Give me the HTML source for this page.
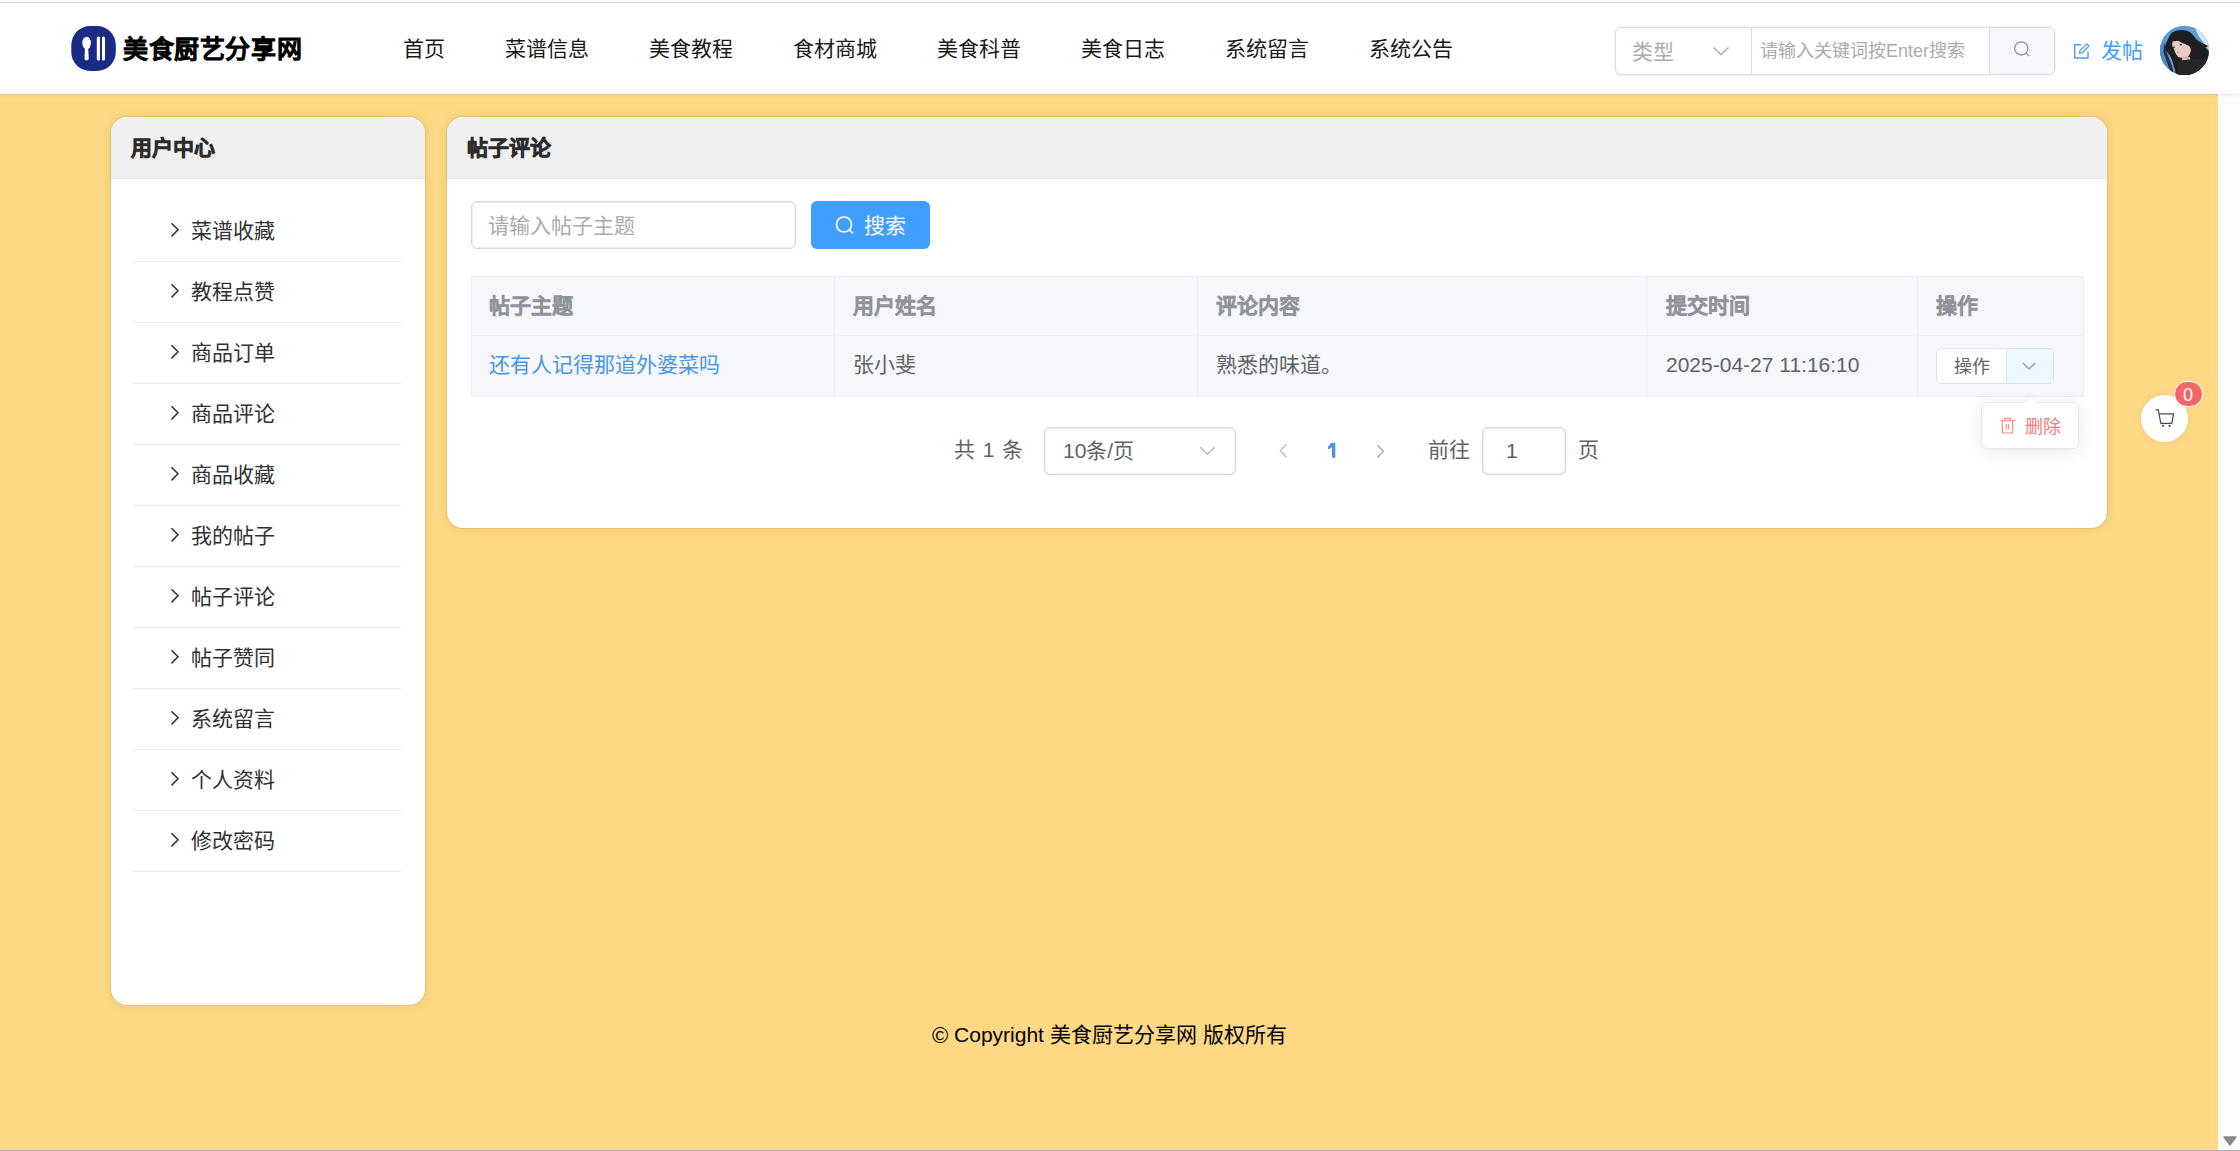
<!DOCTYPE html>
<html lang="zh-CN"><head><meta charset="utf-8">
<style>
*{box-sizing:border-box;margin:0;padding:0}
html,body{width:2240px;height:1151px;overflow:hidden}
body{position:relative;background:#fed884;font-family:"Liberation Sans",sans-serif;color:#303133}
.abs{position:absolute}
.t{position:absolute;white-space:nowrap;line-height:1}
.b{-webkit-text-stroke:0.7px currentColor}
#topline{left:0;top:0;width:2240px;height:3px;background:linear-gradient(#fafafa 0,#fafafa 1px,#fff 1px);border-bottom:1px solid #e0e0e0}
#header{left:0;top:3px;width:2240px;height:91px;background:#fff;box-shadow:0 1px 3px rgba(0,0,0,.10);z-index:5}
#scroll{left:2218px;top:94px;width:22px;height:1057px;background:#fdfdfd}
#botline{left:0;top:1150px;width:2240px;height:1px;background:#aab0b3}
.card{background:#fff;border-radius:16px;box-shadow:0 0 0 1px rgba(190,150,70,.22),0 0 10px rgba(180,130,40,.22);overflow:hidden}
.cardhd{position:absolute;left:0;top:0;right:0;height:62px;background:#f0f0f0;border-bottom:1px solid #e4e4e4}
.nav{font-size:21px;color:#1a1a1a;top:35px}
.menu .row{position:absolute;left:22px;width:268px;height:61px;border-bottom:1px solid #ebebeb}
.menu .row span{position:absolute;left:58px;top:19px;font-size:21px;color:#303133;line-height:1;white-space:nowrap}
.menu .row svg{position:absolute;left:37px;top:21px}
.th{font-size:21px;color:#909399;top:295px;-webkit-text-stroke:1.3px #909399 !important}
.td{font-size:21px;color:#606266;top:354px}
.vl{position:absolute;top:277px;width:1px;height:119px;background:#ebeef5}
</style></head><body>
<div id="topline" class="abs"></div>
<div id="header" class="abs">
  <svg class="abs" style="left:71px;top:23px" width="45" height="45" viewBox="0 0 45 45">
    <rect x="0.3" y="0" width="44.5" height="45" rx="19" fill="#1b2a85"/>
    <ellipse cx="15.6" cy="17" rx="4.3" ry="6.2" fill="#fff"/>
    <path d="M14 21 L17.2 21 L17.7 32.5 C17.7 35 13.5 35 13.5 32.5 Z" fill="#fff"/>
    <rect x="25.8" y="10.5" width="3.2" height="24" rx="1.6" fill="#fff"/>
    <rect x="31" y="10.5" width="3" height="24" rx="1.5" fill="#fff"/>
  </svg>
  <div class="t b" style="left:123px;top:34px;font-size:25px;letter-spacing:0.6px;color:#000;-webkit-text-stroke:1.5px #000">美食厨艺分享网</div>
  <div class="t nav" style="left:403px">首页</div>
  <div class="t nav" style="left:505px">菜谱信息</div>
  <div class="t nav" style="left:649px">美食教程</div>
  <div class="t nav" style="left:793px">食材商城</div>
  <div class="t nav" style="left:937px">美食科普</div>
  <div class="t nav" style="left:1081px">美食日志</div>
  <div class="t nav" style="left:1225px">系统留言</div>
  <div class="t nav" style="left:1369px">系统公告</div>

  <!-- search group -->
  <div class="abs" style="left:1615px;top:24px;width:440px;height:48px;border:1px solid #d9dce3;border-radius:6px;overflow:hidden;box-shadow:0 0 0 0.5px rgba(217,220,227,.6)">
    <div class="abs" style="left:135px;top:0;width:1px;height:46px;background:#d9dce3"></div>
    <div class="abs" style="left:373px;top:0;width:66px;height:46px;background:#f5f7fa;border-left:1px solid #d9dce3"></div>
  </div>
  <div class="t" style="left:1632px;top:38px;font-size:21px;color:#a8abb2">类型</div>
  <svg class="abs" style="left:1712px;top:43px" width="18" height="10" viewBox="0 0 18 10"><path d="M1.5 1.5 L9 8.8 L16.5 1.5" fill="none" stroke="#a8abb2" stroke-width="1.4"/></svg>
  <div class="t" style="left:1760px;top:39px;font-size:18px;color:#a8abb2">请输入关键词按Enter搜索</div>
  <svg class="abs" style="left:2012px;top:35px" width="20" height="20" viewBox="0 0 20 20"><circle cx="9.3" cy="10.4" r="6.6" fill="none" stroke="#8f9296" stroke-width="1.3"/><path d="M14 15.2 L17 18" stroke="#8f9296" stroke-width="1.3"/></svg>
  <svg class="abs" style="left:2072px;top:38px" width="20" height="20" viewBox="0 0 20 20"><path d="M9 3.7 H2.7 V17 H16 V10.5" fill="none" stroke="#4a9ff5" stroke-width="1.4"/><path d="M7.5 12.3 L8 9.5 L14.8 2.8 L17 5 L10.3 11.8 Z" fill="none" stroke="#4a9ff5" stroke-width="1.3"/></svg>
  <div class="t" style="left:2101px;top:37px;font-size:21px;color:#409eff">发帖</div>
  <div class="abs" style="left:2160px;top:23px;width:49px;height:49px;border-radius:50%;overflow:hidden;background:#6aa3d8">
    <svg width="49" height="49" viewBox="0 0 49 49">
      <rect width="49" height="49" fill="#5b9ad4"/>
      <path d="M0 20 L8 14 L6 49 L0 49Z" fill="#4f8cc6"/>
      <path d="M34 0 L49 0 L49 24 C46 20 42 15 38 9Z" fill="#d6e6f3"/>
      <path d="M12 6.5 C15 4.5 19 3.8 23 4 C27 4.3 30.5 6 32.7 8.8 C34.5 11 35.5 12.5 36.5 13.5 C39 15.5 42 17 48.7 20 L45 21.5 C47 23 48.7 25 49 26.2 L49 49 L16 49 C15.5 46 15 44 14 41 C13 37 12 33 10.5 30.5 C8.5 28 6.5 25 4.5 22 C5.5 19 6.5 16 8 13 C9 10.5 10.5 8 12 6.5Z" fill="#1e1e20"/>
      <path d="M4 17 C6 25 9 33 12 40 L14 49 L11 49 C9 42 6 34 3.5 26 Z" fill="#26313c"/>
      <path d="M13 13.5 C15 14 16.5 14.2 17.7 14.4 C20 15.8 22.5 17 24.3 17.7 C26 18.5 28 19.2 29 20 C30.3 21.5 30.9 23 30.9 24.3 C30.5 27 29.5 29.5 28 30.9 C26.5 31.6 24.5 31.9 22.9 31.8 C21 31.6 19.5 31.3 18.2 30.9 C17 29.8 16 28.5 15.4 27.1 C14.8 25.7 14.3 24.2 14 22.9 C13.3 21.8 12.6 20.7 12.1 19.6 C12.3 17.5 12.6 15.5 13 13.5Z" fill="#e9cbc3"/>
      <path d="M22.4 31.8 L30 31 L30.5 34 L22 35Z" fill="#dcbab2"/>
      <path d="M19 35 C25 33.5 38 32.5 45 33.2 L49 38 L49 49 L17 49 C17 44 17.5 39 19 35Z" fill="#262628"/>
      <path d="M11 10 C17 9 25 10.5 31 16 C26 14.5 20 14 13 15.5 Z" fill="#1e1e20"/>
      <ellipse cx="20.8" cy="18.6" rx="1.3" ry="0.9" fill="#3b2523"/>
      <ellipse cx="14" cy="21.2" rx="0.9" ry="0.8" fill="#3b2523"/>
      <ellipse cx="17.8" cy="26.4" rx="0.9" ry="0.6" fill="#c98b86"/>
    </svg>
  </div>
</div>
<div id="scroll" class="abs"></div>
<svg class="abs" style="left:2223px;top:1135px" width="14" height="12" viewBox="0 0 14 12"><path d="M1 2 H13 L7 10 Z" fill="#8a8a8a" stroke="#8a8a8a" stroke-width="1.5" stroke-linejoin="round"/></svg>
<div id="botline" class="abs"></div>

<!-- sidebar -->
<div class="card abs menu" style="left:111px;top:117px;width:314px;height:888px">
  <div class="cardhd"></div>
  <div class="t b" style="left:20px;top:20px;font-size:21px;color:#2b2b2b;-webkit-text-stroke:1.5px #2b2b2b">用户中心</div>
  <div class="row" style="top:84px"><svg width="10" height="17" viewBox="0 0 10 17"><path d="M1.5 1.2 L8 7.8 L1.5 14.4" fill="none" stroke="#303133" stroke-width="1.5"/></svg><span>菜谱收藏</span></div>
  <div class="row" style="top:145px"><svg width="10" height="17" viewBox="0 0 10 17"><path d="M1.5 1.2 L8 7.8 L1.5 14.4" fill="none" stroke="#303133" stroke-width="1.5"/></svg><span>教程点赞</span></div>
  <div class="row" style="top:206px"><svg width="10" height="17" viewBox="0 0 10 17"><path d="M1.5 1.2 L8 7.8 L1.5 14.4" fill="none" stroke="#303133" stroke-width="1.5"/></svg><span>商品订单</span></div>
  <div class="row" style="top:267px"><svg width="10" height="17" viewBox="0 0 10 17"><path d="M1.5 1.2 L8 7.8 L1.5 14.4" fill="none" stroke="#303133" stroke-width="1.5"/></svg><span>商品评论</span></div>
  <div class="row" style="top:328px"><svg width="10" height="17" viewBox="0 0 10 17"><path d="M1.5 1.2 L8 7.8 L1.5 14.4" fill="none" stroke="#303133" stroke-width="1.5"/></svg><span>商品收藏</span></div>
  <div class="row" style="top:389px"><svg width="10" height="17" viewBox="0 0 10 17"><path d="M1.5 1.2 L8 7.8 L1.5 14.4" fill="none" stroke="#303133" stroke-width="1.5"/></svg><span>我的帖子</span></div>
  <div class="row" style="top:450px"><svg width="10" height="17" viewBox="0 0 10 17"><path d="M1.5 1.2 L8 7.8 L1.5 14.4" fill="none" stroke="#303133" stroke-width="1.5"/></svg><span>帖子评论</span></div>
  <div class="row" style="top:511px"><svg width="10" height="17" viewBox="0 0 10 17"><path d="M1.5 1.2 L8 7.8 L1.5 14.4" fill="none" stroke="#303133" stroke-width="1.5"/></svg><span>帖子赞同</span></div>
  <div class="row" style="top:572px"><svg width="10" height="17" viewBox="0 0 10 17"><path d="M1.5 1.2 L8 7.8 L1.5 14.4" fill="none" stroke="#303133" stroke-width="1.5"/></svg><span>系统留言</span></div>
  <div class="row" style="top:633px"><svg width="10" height="17" viewBox="0 0 10 17"><path d="M1.5 1.2 L8 7.8 L1.5 14.4" fill="none" stroke="#303133" stroke-width="1.5"/></svg><span>个人资料</span></div>
  <div class="row" style="top:694px"><svg width="10" height="17" viewBox="0 0 10 17"><path d="M1.5 1.2 L8 7.8 L1.5 14.4" fill="none" stroke="#303133" stroke-width="1.5"/></svg><span>修改密码</span></div>
</div>

<!-- main card -->
<div class="card abs" style="left:447px;top:117px;width:1660px;height:411px">
  <div class="cardhd"></div>
  <div class="t b" style="left:20px;top:20px;font-size:21px;color:#2b2b2b;-webkit-text-stroke:1.5px #2b2b2b">帖子评论</div>
</div>

<!-- search -->
<div class="abs" style="left:471px;top:201px;width:325px;height:48px;border:1px solid #d5d7db;border-radius:6px;background:#fff;box-shadow:inset 0 0 0 1px #eeeff1"></div>
<div class="t" style="left:488px;top:215px;font-size:21px;color:#a8abb2">请输入帖子主题</div>
<div class="abs" style="left:811px;top:201px;width:119px;height:48px;border-radius:6px;background:#409eff"></div>
<svg class="abs" style="left:834px;top:214px" width="22" height="22" viewBox="0 0 22 22"><circle cx="10" cy="10.5" r="7.5" fill="none" stroke="#fff" stroke-width="1.7"/><path d="M15.5 16 L19 19.5" stroke="#fff" stroke-width="1.7"/></svg>
<div class="t" style="left:864px;top:215px;font-size:21px;color:#fff">搜索</div>

<!-- table -->
<div class="abs" style="left:471px;top:276px;width:1613px;height:121px;background:#f5f7fa;border:1px solid #ebeef5"></div>
<div class="abs" style="left:472px;top:335px;width:1611px;height:1px;background:#ebeef5"></div>
<div class="vl" style="left:834px"></div>
<div class="vl" style="left:1197px"></div>
<div class="vl" style="left:1647px"></div>
<div class="vl" style="left:1917px"></div>
<div class="t th b" style="left:489px;-webkit-text-stroke:0.7px #909399">帖子主题</div>
<div class="t th b" style="left:853px;-webkit-text-stroke:0.7px #909399">用户姓名</div>
<div class="t th b" style="left:1216px;-webkit-text-stroke:0.7px #909399">评论内容</div>
<div class="t th b" style="left:1666px;-webkit-text-stroke:0.7px #909399">提交时间</div>
<div class="t th b" style="left:1936px;-webkit-text-stroke:0.7px #909399">操作</div>
<div class="t td" style="left:489px;color:#4796e6">还有人记得那道外婆菜吗</div>
<div class="t td" style="left:853px">张小斐</div>
<div class="t td" style="left:1216px">熟悉的味道。</div>
<div class="t td" style="left:1666px">2025-04-27 11:16:10</div>
<!-- split button -->
<div class="abs" style="left:1936px;top:348px;width:118px;height:36px;border:1px solid #dde3ec;border-radius:5px;background:#fff;overflow:hidden">
  <div class="abs" style="left:69px;top:0;width:48px;height:34px;background:#eef6ff;border-left:1px solid #dde3ec"></div>
</div>
<div class="t" style="left:1954px;top:357.5px;font-size:18px;color:#606266">操作</div>
<svg class="abs" style="left:2021px;top:361px" width="16" height="10" viewBox="0 0 16 10"><path d="M1.8 2 L8 8 L14.2 2" fill="none" stroke="#5a9de6" stroke-width="1.2"/></svg>

<!-- popup -->
<div class="abs" style="left:1981px;top:402px;width:98px;height:47px;background:#fff;border:1px solid #e4e7ed;border-radius:6px;box-shadow:0 3px 18px rgba(0,0,0,.09)"></div>
<svg class="abs" style="left:2021px;top:395px" width="18" height="9" viewBox="0 0 18 9"><path d="M1 8.5 L9 0.8 L17 8.5" fill="#fff" stroke="#e4e7ed" stroke-width="1"/><rect x="0" y="8" width="18" height="2" fill="#fff"/></svg>
<svg class="abs" style="left:1999px;top:417px" width="18" height="18" viewBox="0 0 18 18"><path d="M1.5 3.8 H16.5 M5.8 3.8 V1.3 H11.2 V3.8 M3.3 3.8 V16 H13.7 V3.8 M7.3 7 V12.5 M9.7 7 V12.5" fill="none" stroke="#f08484" stroke-width="1.1"/></svg>
<div class="t" style="left:2025px;top:417.5px;font-size:18px;color:#f17d7d">删除</div>

<!-- pagination -->
<div class="t" style="left:954px;top:439px;font-size:21px;color:#606266;word-spacing:2px">共 1 条</div>
<div class="abs" style="left:1044px;top:427px;width:192px;height:48px;border:1px solid #d5d7db;border-radius:6px;background:#fff;box-shadow:inset 0 0 0 1px #eeeff1"></div>
<div class="t" style="left:1063px;top:440px;font-size:21px;color:#606266">10条/页</div>
<svg class="abs" style="left:1199px;top:446px" width="17" height="10" viewBox="0 0 17 10"><path d="M1.2 1.2 L8.5 8.3 L15.8 1.2" fill="none" stroke="#b3b6bc" stroke-width="1.3"/></svg>
<svg class="abs" style="left:1279px;top:443px" width="9" height="16" viewBox="0 0 9 16"><path d="M7.3 1.3 L1.3 7.8 L7.3 14.3" fill="none" stroke="#b9bcc2" stroke-width="1.3"/></svg>
<svg class="abs" style="left:1326px;top:441px" width="12" height="18" viewBox="0 0 12 18"><path d="M4.5 2 H9.3 V16.8 H6 V6.3 C5 7.2 3.6 7.9 2 8.3 V5.6 C3.5 5 4.3 3.4 4.5 2 Z" fill="#4494ec"/></svg>
<svg class="abs" style="left:1376px;top:444px" width="9" height="16" viewBox="0 0 9 16"><path d="M1.5 1.3 L7.3 7.3 L1.5 13.3" fill="none" stroke="#a3a6ac" stroke-width="1.3"/></svg>
<div class="t" style="left:1428px;top:439px;font-size:21px;color:#606266">前往</div>
<div class="abs" style="left:1482px;top:427px;width:84px;height:48px;border:1px solid #d5d7db;border-radius:6px;background:#fff;box-shadow:inset 0 0 0 1px #eeeff1"></div>
<div class="t" style="left:1506px;top:440px;font-size:21px;color:#606266">1</div>
<div class="t" style="left:1578px;top:439px;font-size:21px;color:#606266">页</div>

<!-- cart -->
<div class="abs" style="left:2141px;top:395px;width:47px;height:47px;border-radius:50%;background:#fff;box-shadow:0 0 6px rgba(0,0,0,.08)"></div>
<svg class="abs" style="left:2154px;top:408px" width="22" height="20" viewBox="0 0 22 20"><path d="M1.5 1.8 H4.3 L6.8 15.3 H17.8 L19.5 5.8 H5.3" fill="none" stroke="#4a4a4a" stroke-width="1.2" stroke-linejoin="round"/><circle cx="9" cy="17.8" r="1.1" fill="#4a4a4a"/><circle cx="15.6" cy="17.8" r="1.1" fill="#4a4a4a"/></svg>
<div class="abs" style="left:2174px;top:381px;width:29px;height:26px;border-radius:13px;background:#f26668;border:1px solid #fff"></div>
<div class="t" style="left:2183px;top:386px;font-size:18px;color:#fff">0</div>

<!-- footer -->
<div class="t" style="left:932px;top:1024px;font-size:21px;color:#000"><span style="font-size:22px;vertical-align:-0.5px">©</span> Copyright 美食厨艺分享网 版权所有</div>
</body></html>
